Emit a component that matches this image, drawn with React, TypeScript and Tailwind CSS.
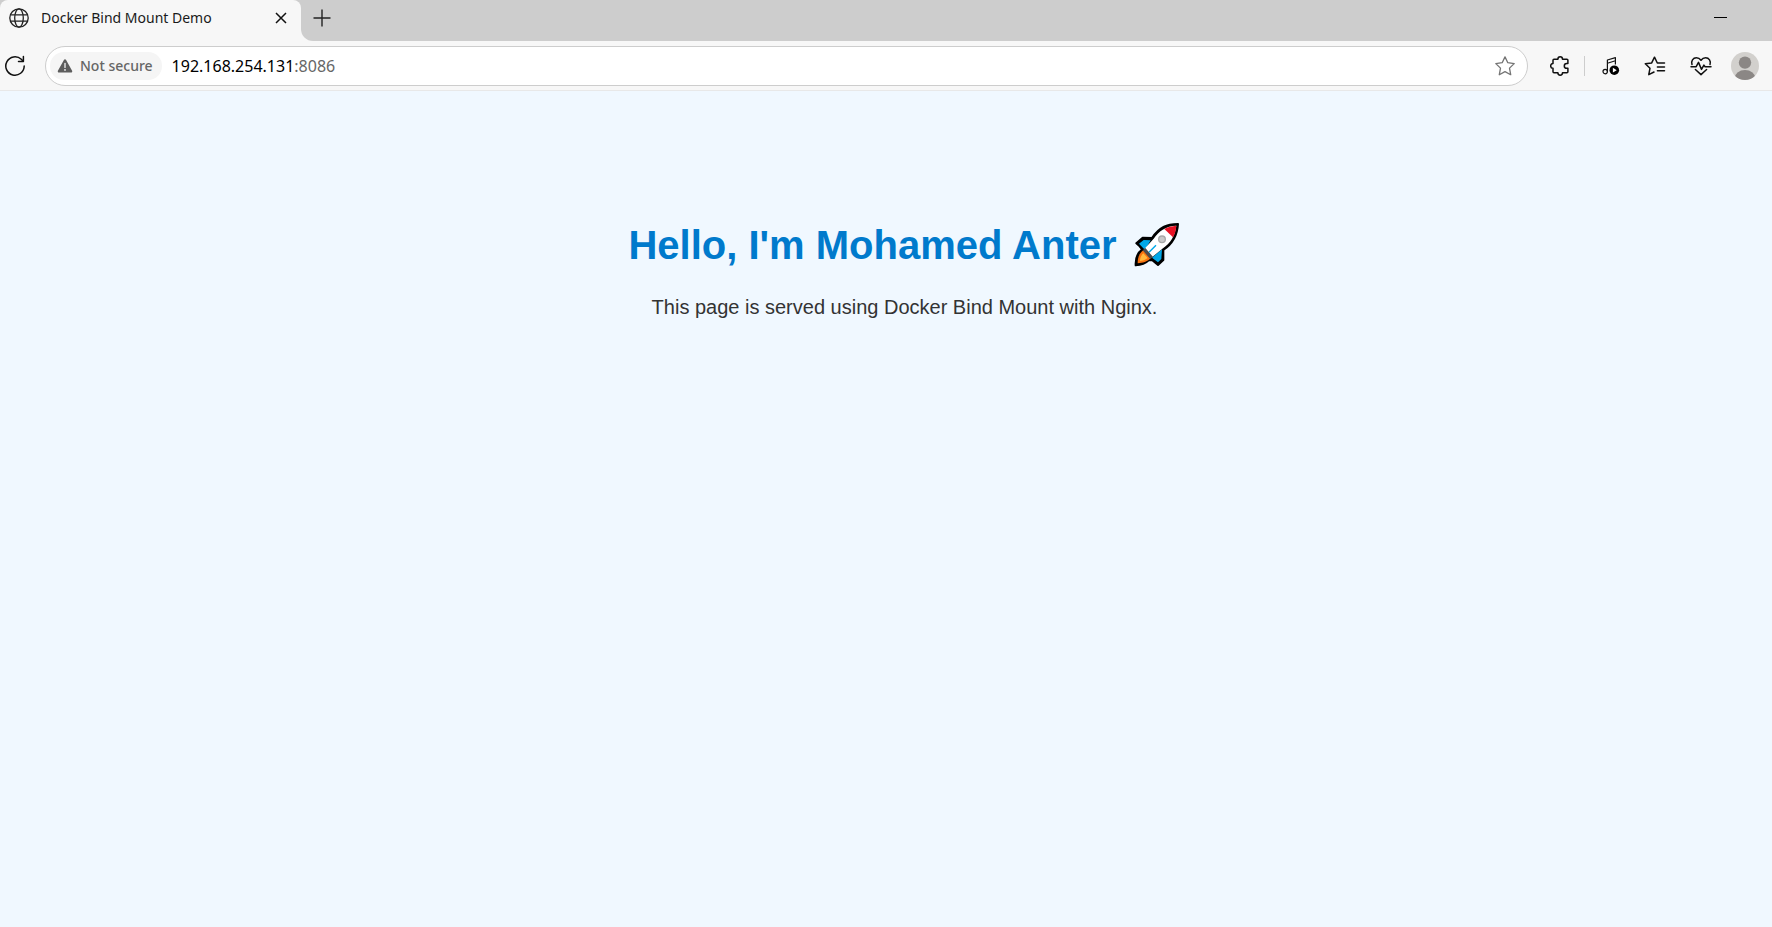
import React from "react";

function GlobeIcon() {
  return (
    <svg width="20" height="20" viewBox="0 0 20 20" fill="none" stroke="#222" strokeWidth="1.3" aria-hidden="true">
      <circle cx="10" cy="10" r="9.2" />
      <ellipse cx="10" cy="10" rx="4.3" ry="9.2" />
      <path d="M1.6 6.8h16.8M1.6 13.2h16.8" />
    </svg>
  );
}

function CloseIcon() {
  return (
    <svg width="12" height="12" viewBox="0 0 12 12" fill="none" stroke="#111" strokeWidth="1.5" aria-hidden="true">
      <path d="M1 1l10 10M11 1L1 11" />
    </svg>
  );
}

function PlusIcon() {
  return (
    <svg width="18" height="18" viewBox="0 0 18 18" fill="none" stroke="#222" strokeWidth="1.4" aria-hidden="true">
      <path d="M9 .5v17M.5 9h17" />
    </svg>
  );
}

function ReloadIcon() {
  return (
    <svg width="22" height="22" viewBox="0 0 22 22" fill="none" stroke="#111" strokeWidth="1.5" strokeLinecap="round" strokeLinejoin="round" aria-hidden="true">
      <path d="M20.2 11a9.2 9.2 0 1 1-2.9-6.7l1.9 2" />
      <path d="M19.4 1.6v4.9h-4.9" />
    </svg>
  );
}

function WarningIcon() {
  return (
    <svg width="16" height="16" viewBox="0 0 16 16" aria-hidden="true">
      <path d="M6.9 1.9a1.3 1.3 0 0 1 2.2 0l6 10.9a1.2 1.2 0 0 1-1.1 1.8H2a1.2 1.2 0 0 1-1.1-1.8z" fill="#5d5d5d" />
      <path d="M8 5.4v4" stroke="#f5f5f5" strokeWidth="1.3" strokeLinecap="round" />
      <circle cx="8" cy="11.9" r=".9" fill="#f5f5f5" />
    </svg>
  );
}

function StarIcon() {
  return (
    <svg width="20" height="20" viewBox="0 0 20 20" fill="none" stroke="#747474" strokeWidth="1.3" strokeLinejoin="round" aria-hidden="true">
      <path d="M10 .9l2.8 5.8 6.4.9-4.7 4.5 1.2 6.6-5.7-3.1-5.7 3.1 1.2-6.6L.8 7.6l6.4-.9z" />
    </svg>
  );
}

function PuzzleIcon() {
  return (
    <svg width="20" height="20" viewBox="0 0 20 20" fill="none" stroke="#111" strokeWidth="1.5" strokeLinejoin="round" aria-hidden="true">
      <path d="M4 3.2h3.9C7.900 1.600 8.900.8 10.200.8s2.300.8 2.300 2.400h4.400q1 0 1 1v3.300h-1.200c-1.500 0-2.400 1-2.400 2.400s.9 2.400 2.400 2.400h1.200v3.500q0 1-1 1h-4.400c0 1.600-1 2.400-2.300 2.400s-2.300-.8-2.300-2.400H4q-1 0-1-1v-3.500c-1.500 0-2.300-1-2.300-2.300S1.500 7.600 3 7.600V4.200q0-1 1-1z" />
    </svg>
  );
}

function MusicIcon() {
  return (
    <svg width="18" height="20" viewBox="0 0 18 20" fill="none" stroke="#111" strokeWidth="1.2" strokeLinejoin="round" aria-hidden="true">
      <circle cx="3.2" cy="15.6" r="2.2" />
      <path d="M5.400 15.600V4l8-2.400v7M5.400 7.200l8-2.400" />
      <circle cx="12.3" cy="14.2" r="4.8" fill="#000" stroke="none" />
      <path d="M10.900 11.800l3.800 2.400-3.800 2.400z" fill="#fff" stroke="none" />
    </svg>
  );
}

function FavoritesIcon() {
  return (
    <svg width="22" height="20" viewBox="0 0 22 20" fill="none" stroke="#111" strokeWidth="1.5" strokeLinejoin="round" strokeLinecap="round" aria-hidden="true">
      <path d="M20.500 7h-7.200L10.500 1.200 7.700 6.900l-6.400.9 4.700 4.400-1.200 6.500 5.200-2.700" />
      <path d="M13.400 10.900h7.100M13.400 14.700h7.100" />
    </svg>
  );
}

function HeartPulseIcon() {
  return (
    <svg width="22" height="20" viewBox="0 0 22 20" fill="none" stroke="#111" strokeWidth="1.5" strokeLinejoin="round" strokeLinecap="round" aria-hidden="true">
      <path d="M2 8.600C.8 5 3 1.700 6.400 1.700c2 0 3.500 1.100 4.600 2.600 1.100-1.500 2.600-2.600 4.600-2.600C19 1.700 21.200 5 20 8.600" />
      <path d="M1 10.700h5.200l2.300-4.300 3 7 2.400-4.300 1.200 1.600H21" />
      <path d="M5.400 13.500L11 18.600l5.600-5.100" />
    </svg>
  );
}

function AvatarIcon() {
  return (
    <svg width="28" height="28" viewBox="0 0 28 28" aria-hidden="true">
      <defs>
        <clipPath id="avatar-disc">
          <circle cx="14" cy="14" r="14" />
        </clipPath>
      </defs>
      <g clipPath="url(#avatar-disc)">
        <rect width="28" height="28" fill="#d2d0cd" />
        <circle cx="14" cy="10.6" r="6.2" fill="#8b8785" />
        <ellipse cx="14" cy="26.5" rx="10.5" ry="8.5" fill="#8b8785" />
      </g>
    </svg>
  );
}

function RocketIcon() {
  return (
    <svg width="48" height="48" viewBox="33 33 144 144" role="img" aria-label="rocket">
      <path
        d="M168 42C134 42 112 52 90 84L62 83 43 100 53 109C56 113 59 116 60 119C44 130 40 146 41 166C58 165 69 162 80 151L91 151 108 165 124 150V120C150 103 166 76 168 42Z"
        fill="#000"
        stroke="#000"
        strokeWidth="6"
        strokeLinejoin="round"
      />
      <path d="M86 91L65 90 51 101 69 120zM120 118L118 147 108 157 90 143z" fill="#00a8e8" />
      <path d="M64 121C50 131 47 145 47 160C63 159 75 156 86 145z" fill="#f7720f" />
      <path d="M64 130C56 138 54 146 54 153C62 153 69 150 77 144z" fill="#ffb83d" />
      <path d="M163 47C132 48 111 62 95 86L69 115 91 141 121 116C146 99 159 78 163 47Z" fill="#fff" />
      <path d="M70 114L62 121 85 147 93 141z" fill="#4c4c4c" />
      <path d="M163 47C150 48 137 51 127 57L153 82C159 72 162 60 163 47Z" fill="#e81224" />
      <circle cx="120" cy="88" r="10" fill="#c9c9c9" stroke="#a8a8a8" strokeWidth="4" />
      <path d="M102 106L81 127" stroke="#00a8e8" strokeWidth="4" />
    </svg>
  );
}

function TabStrip() {
  return (
    <header className="flex h-[41px] bg-[#f7f7f7]">
      <div className="w-[301px] shrink-0 bg-[#cdcdcd]">
        <div className="flex h-full items-center rounded-t-lg bg-[#f7f7f7] pr-3 pb-1.5 pl-[9px]">
          <GlobeIcon />
          <span className="ml-3 flex-1 font-['Noto_Sans',sans-serif] text-sm whitespace-nowrap text-[#1a1a1a]">Docker Bind Mount Demo</span>
          <button type="button" aria-label="Close tab" className="p-0.5">
            <CloseIcon />
          </button>
        </div>
      </div>
      <div className="flex flex-1 items-center justify-between rounded-bl-xl bg-[#cdcdcd] pr-[45px] pb-1.5 pl-3">
        <button type="button" aria-label="New tab">
          <PlusIcon />
        </button>
        <button type="button" aria-label="Minimize" className="py-2">
          <span className="block h-px w-[13px] bg-black" />
        </button>
      </div>
    </header>
  );
}

function Toolbar() {
  return (
    <nav className="flex h-[50px] items-center border-b border-[#e8e8e8] bg-[#f7f7f7] pr-[13px] pl-1 font-['Noto_Sans',sans-serif]">
      <button type="button" aria-label="Reload">
        <ReloadIcon />
      </button>
      <div className="ml-[19px] flex h-10 flex-1 items-center rounded-full border border-[#cdcdcd] bg-white pr-3 pl-1">
        <button type="button" className="flex h-7 items-center gap-[7px] rounded-full bg-[#f5f5f5] pr-[9px] pl-[7px] text-sm font-medium whitespace-nowrap text-[#666]">
          <WarningIcon />
          Not secure
        </button>
        <div className="ml-[10px] flex-1 text-base whitespace-nowrap text-black">
          192.168.254.131<span className="text-[#666]">:8086</span>
        </div>
        <button type="button" aria-label="Add to favorites">
          <StarIcon />
        </button>
      </div>
      <button type="button" aria-label="Extensions" className="ml-[22px]">
        <PuzzleIcon />
      </button>
      <div className="mr-[17px] ml-[14px] h-5 w-px bg-[#cdcdcd]" />
      <div className="flex items-center gap-6">
        <button type="button" aria-label="Media">
          <MusicIcon />
        </button>
        <button type="button" aria-label="Favorites">
          <FavoritesIcon />
        </button>
        <button type="button" aria-label="Browser essentials">
          <HeartPulseIcon />
        </button>
      </div>
      <button type="button" aria-label="Profile" className="ml-[19px]">
        <AvatarIcon />
      </button>
    </nav>
  );
}

export default function App() {
  return (
    <div className="flex min-h-screen flex-col bg-[#f0f8ff]">
      <TabStrip />
      <Toolbar />
      <main className="flex-1 pt-[126px] pl-[37px] text-center font-['Liberation_Sans',sans-serif]">
        <h1 className="flex items-center justify-center gap-4 text-[40px] leading-[56px] font-bold text-[#007acc]">
          Hello, I'm Mohamed Anter <RocketIcon />
        </h1>
        <p className="mt-5 text-xl text-[#333]">This page is served using Docker Bind Mount with Nginx.</p>
      </main>
    </div>
  );
}
